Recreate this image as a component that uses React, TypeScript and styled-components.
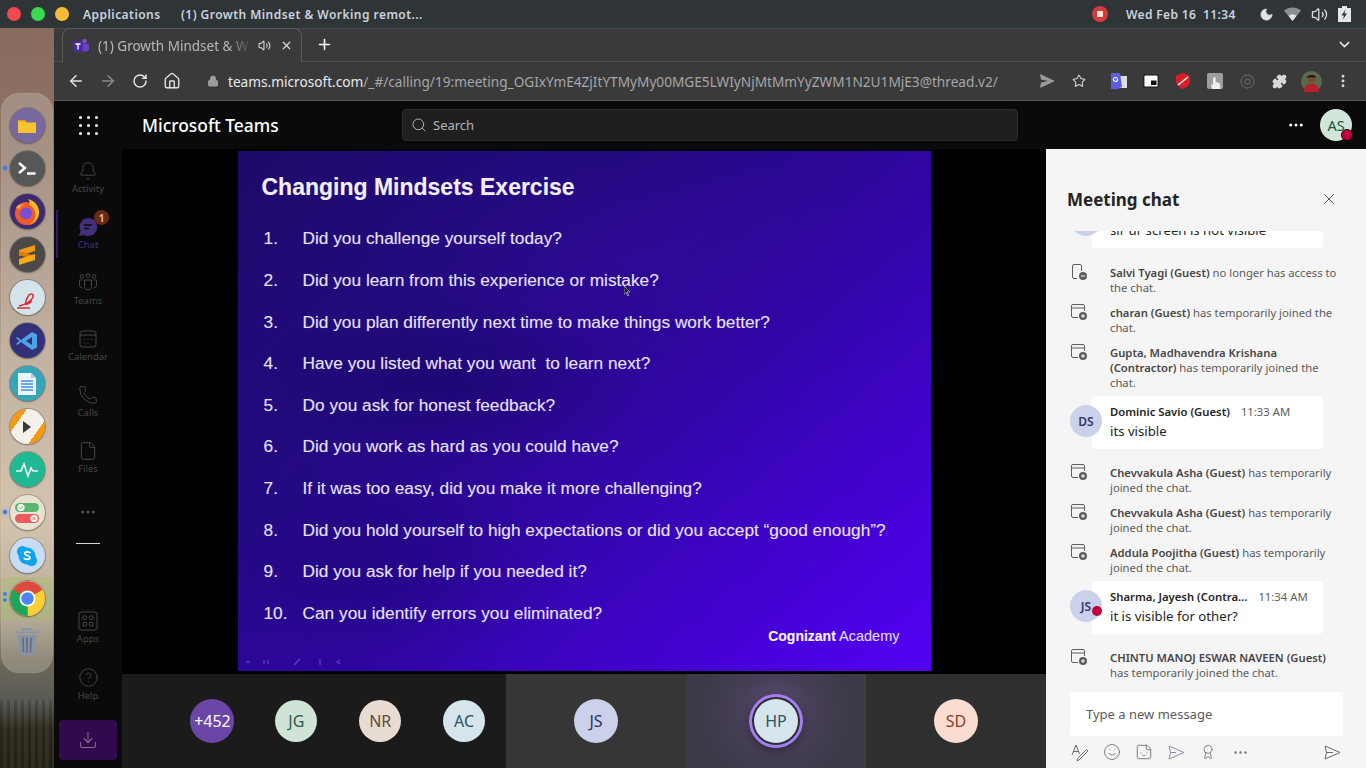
import { ReactNode } from 'react';
import styled, { createGlobalStyle } from 'styled-components';
import {
  ArrowLeft,
  ArrowRight,
  Award,
  Bell,
  ChevronDown,
  CircleHelp,
  Download,
  File,
  Home,
  Lock,
  Moon,
  MoreHorizontal,
  MoreVertical,
  Phone,
  Plus,
  Puzzle,
  RotateCw,
  Search,
  Smile,
  Star,
  Sticker,
  Volume2,
  X,
} from 'lucide-react';

const GlobalStyle = createGlobalStyle`
  html, body { margin: 0; padding: 0; height: 100%; overflow: hidden; }
  * { box-sizing: border-box; }
  body { font-family: "Noto Sans", "Open Sans", sans-serif; }
`;

const Desktop = styled.div`
  width: 1366px;
  height: 768px;
  display: flex;
  flex-direction: column;
  overflow: hidden;
  background:
    repeating-linear-gradient(90deg, rgba(0, 0, 0, 0.14) 0 3px, rgba(255, 255, 255, 0.03) 3px 7px) 0 700px / 54px 68px no-repeat,
    linear-gradient(
      180deg,
      #86695a 0%,
      #8f7566 20%,
      #b5a08c 45%,
      #cdb99f 68%,
      #a89c84 80%,
      #6f6a58 86%,
      #5a5a56 91%,
      #2f2b1f 95%,
      #28251b 100%
    );
`;

/* ---------- ubuntu top bar ---------- */
const TopBar = styled.div`
  height: 28px;
  flex: none;
  display: flex;
  align-items: center;
  background: #2f3436;
  padding-left: 7px;
  color: #c9d3df;
  font-size: 12px;
  font-weight: 600;
  letter-spacing: 0.45px;
`;
const Light = styled.span<{ $c: string }>`
  width: 14px;
  height: 14px;
  border-radius: 50%;
  background: ${(p) => p.$c};
  margin-right: 10px;
`;
const BarTitle = styled.span`
  margin-left: 4px;
  width: 98px;
  white-space: nowrap;
`;
const BarSpacer = styled.div`
  flex: 1;
`;
const RecDot = styled.div`
  width: 16px;
  height: 16px;
  border-radius: 50%;
  background: #d63b3b;
  display: flex;
  align-items: center;
  justify-content: center;
  margin-right: 18px;
  &::after {
    content: '';
    width: 6px;
    height: 6px;
    background: #f3e6d8;
    border-radius: 1px;
  }
`;
const Clock = styled.span`
  width: 132.5px;
  white-space: pre;
  letter-spacing: 0.35px;
`;
const TrayIcons = styled.div`
  display: flex;
  align-items: center;
  gap: 10px;
  width: 107.5px;
  color: #dfe3e6;
`;

/* ---------- dock ---------- */
const DesktopBody = styled.div`
  flex: 1;
  display: flex;
  min-height: 0;
`;
const DockStrip = styled.div`
  width: 54px;
  flex: none;
  padding: 65px 1px 0 1px;
`;
const Dock = styled.div`
  height: 580px;
  width: 52px;
  border-radius: 18px;
  background: rgba(226, 222, 214, 0.28);
  box-shadow: inset 0 0 0 1px rgba(255, 255, 255, 0.06);
  display: flex;
  flex-direction: column;
  align-items: center;
  padding-top: 11px;
`;
const DockSlot = styled.div<{ $active?: boolean; $dots?: number }>`
  position: relative;
  width: 52px;
  height: 43px;
  flex: none;
  display: flex;
  align-items: center;
  justify-content: center;
  background: ${(p) => (p.$active ? 'rgba(160,190,90,0.35)' : 'transparent')};
  &::before {
    content: '';
    display: ${(p) => (p.$dots ? 'block' : 'none')};
    position: absolute;
    left: 2px;
    top: ${(p) => (p.$dots === 2 ? 15 : 19)}px;
    width: 4px;
    height: 4px;
    border-radius: 50%;
    background: #3f7fe8;
    box-shadow: ${(p) => (p.$dots === 2 ? '0 6px 0 #3f7fe8' : '0 0 3px #3f7fe8')};
  }
`;
const DockBadge = styled.div<{ $bg: string }>`
  width: 35px;
  height: 35px;
  border-radius: 50%;
  background: ${(p) => p.$bg};
  box-shadow: 0 0 0 1px rgba(90, 80, 70, 0.35), 0 1px 2px rgba(0, 0, 0, 0.3);
  display: flex;
  align-items: center;
  justify-content: center;
  overflow: hidden;
`;

const dockItems: { bg: string; icon: ReactNode; dots?: number; active?: boolean }[] = [
  {
    bg: '#77699f',
    icon: (
      <svg width="20" height="16" viewBox="0 0 20 16">
        <path d="M1 2.500h7l1.500 2H19V15H1z" fill="#f7c52d" />
        <path d="M1 2h7l1 1.500H1z" fill="#e0a21c" />
      </svg>
    ),
  },
  {
    bg: '#555857',
    dots: 1,
    icon: (
      <svg width="20" height="16" viewBox="0 0 20 16">
        <path d="M2 2l6 5-6 5" fill="none" stroke="#fff" strokeWidth="2.400" />
        <path d="M10 12.500h8.500" stroke="#fff" strokeWidth="2.400" />
      </svg>
    ),
  },
  {
    bg: '#3e2a70',
    icon: (
      <svg width="30" height="30" viewBox="0 0 30 30">
        <circle cx="14.500" cy="16.500" r="11.500" fill="#ee5a2c" />
        <circle cx="14" cy="16.500" r="6" fill="#7a4fd0" />
        <path d="M16 2c8 2 12 9 11 15-1 6-5 10-10 11 6-3 7-8 6-13-1-4-3-6-6-7 1-2 1-4-1-6z" fill="#fdb52a" />
        <path d="M4 11c1-3 5-5 9-3-3 0-5 2-5 4z" fill="#f9a13a" />
      </svg>
    ),
  },
  {
    bg: '#4b4a48',
    icon: (
      <svg width="20" height="22" viewBox="0 0 20 22">
        <path d="M2 6l16-5v6L2 12z" fill="#f39a12" />
        <path d="M2 7l16 5v4L2 11z" fill="#d97f0a" />
        <path d="M2 15l16-5v6L2 21z" fill="#f7a918" />
      </svg>
    ),
  },
  {
    bg: '#d5e3ea',
    icon: (
      <svg width="24" height="24" viewBox="0 0 24 24">
        <path
          d="M4 20c4-1 12-4 14-9 1-3-2-4-4-2-2 3-4 7-3 9 1 1 4-1 6-3M2 22h13"
          fill="none"
          stroke="#dd2c33"
          strokeWidth="1.500"
        />
      </svg>
    ),
  },
  {
    bg: '#33307a',
    icon: (
      <svg width="24" height="20" viewBox="0 0 24 20">
        <path
          d="M17 1l5 2.500v13L17 19 6 11l-3.500 3L1 13l3.500-3L1 7l1.500-1L6 9zm0 5l-6 4 6 4z"
          fill="#4ba3e8"
        />
      </svg>
    ),
  },
  {
    bg: '#35a5b8',
    icon: (
      <svg width="20" height="24" viewBox="0 0 20 24">
        <path d="M1 1h13l5 5v17H1z" fill="#eef5fa" />
        <path d="M14 1l5 5h-5z" fill="#b8ccd8" />
        <path d="M4 9h12M4 12h12M4 15h12M4 18h12" stroke="#3f8fe0" strokeWidth="1.600" />
      </svg>
    ),
  },
  {
    bg: 'linear-gradient(125deg,#f29a14 0 28%,#f5f1e8 28% 72%,#f29a14 72%)',
    icon: (
      <svg width="10" height="12" viewBox="0 0 10 12">
        <path d="M1 0l8 6-8 6z" fill="#3a3a3a" />
      </svg>
    ),
  },
  {
    bg: '#21b894',
    icon: (
      <svg width="24" height="16" viewBox="0 0 24 16">
        <path d="M1 9h5l3-7 4 12 3-8 2 3h5" fill="none" stroke="#f2f7f4" strokeWidth="1.600" />
      </svg>
    ),
  },
  {
    bg: '#e6e3d3',
    dots: 1,
    icon: (
      <svg width="28" height="24" viewBox="0 0 28 24">
        <rect x="2" y="2" width="24" height="9" rx="4.500" fill="#5bb56c" />
        <circle cx="8" cy="6.500" r="3.600" fill="#fff" />
        <path d="M6 6.500l1.500 1.500 2.500-3" fill="none" stroke="#5bb56c" />
        <rect x="2" y="13" width="24" height="9" rx="4.500" fill="#ec5b5b" />
        <circle cx="21" cy="17.500" r="3.600" fill="#fff" />
        <path d="M19.500 16l3 3M22.500 16l-3 3" stroke="#ec5b5b" />
      </svg>
    ),
  },
  {
    bg: '#c8ddf5',
    icon: (
      <svg width="24" height="24" viewBox="0 0 24 24">
        <circle cx="7.500" cy="7.500" r="5.500" fill="#0fa5ee" />
        <circle cx="16.500" cy="16.500" r="5.500" fill="#0fa5ee" />
        <circle cx="12" cy="12" r="8.500" fill="#0fa5ee" />
        <path
          d="M15.500 9c-1-1.400-5.500-1.800-5.800.4-.3 2.400 5.600 1.800 5.300 4.400-.3 2-5 1.900-6.200.2"
          fill="none"
          stroke="#fff"
          strokeWidth="1.700"
        />
      </svg>
    ),
  },
  {
    bg: '#fff',
    dots: 2,
    active: true,
    icon: (
      <svg width="35" height="35" viewBox="0 0 35 35">
        <circle cx="17.500" cy="17.500" r="17.500" fill="#dd4b3e" />
        <path d="M17.500 17.500L32.700 8.800A17.500 17.500 0 0 1 17.500 35z" fill="#fcd030" />
        <path d="M17.500 17.500L17.500 35A17.500 17.500 0 0 1 2.300 8.800z" fill="#1da55a" />
        <circle cx="17.500" cy="17.500" r="8" fill="#fff" />
        <circle cx="17.500" cy="17.500" r="6.200" fill="#4c84ee" />
      </svg>
    ),
  },
];

/* ---------- browser chrome ---------- */
const Browser = styled.div`
  flex: 1;
  min-width: 0;
  display: flex;
  flex-direction: column;
`;
const TabStrip = styled.div`
  height: 34px;
  flex: none;
  display: flex;
  align-items: flex-end;
  padding-left: 8px;
  background: #3a3a3a;
  border-top: 1px solid #4a4a4a;
  border-bottom: 1px solid #4e4e4e;
  color: #fff;
`;
const Tab = styled.div`
  width: 240px;
  height: 34px;
  margin-bottom: -1px;
  display: flex;
  align-items: center;
  padding-left: 10px;
  background: #3a3a3a;
  border: 1px solid #5a5a5a;
  border-bottom: none;
  border-radius: 8px 8px 0 0;
  color: #b7b9bb;
  font-size: 13.5px;
`;
const TabTitle = styled.span`
  margin-left: 9px;
  width: 153px;
  white-space: nowrap;
  overflow: hidden;
  -webkit-mask-image: linear-gradient(90deg, #000 85%, transparent);
  mask-image: linear-gradient(90deg, #000 85%, transparent);
`;
const TabActions = styled.div`
  display: flex;
  align-items: center;
  gap: 9px;
  margin-left: 7px;
  color: #d6d6d6;
`;
const NewTab = styled.div`
  width: 44px;
  height: 33px;
  display: flex;
  align-items: center;
  justify-content: center;
`;
const StripEnd = styled.div`
  margin-left: auto;
  width: 44px;
  height: 33px;
  display: flex;
  align-items: center;
  justify-content: center;
  color: #e6e6e6;
`;
const Toolbar = styled.div`
  height: 39px;
  flex: none;
  display: flex;
  align-items: center;
  background: #3a3a3a;
  border-bottom: 1px solid #555;
`;
const NavButton = styled.div<{ $dim?: boolean }>`
  width: 32px;
  height: 32px;
  flex: none;
  display: flex;
  align-items: center;
  justify-content: center;
  color: ${(p) => (p.$dim ? '#8a8a8a' : '#e4e4e4')};
`;
const NavGroup = styled.div`
  display: flex;
  margin-left: 6px;
`;
const LockWrap = styled.div`
  margin-left: 19px;
  width: 21px;
  display: flex;
  color: #9c9c9c;
`;
const Url = styled.div`
  width: 796px;
  font-size: 13.65px;
  color: #a5a7aa;
  white-space: nowrap;
`;
const UrlHost = styled.span`
  color: #e8eaed;
`;
const ExtButton = styled.div`
  width: 32px;
  height: 32px;
  flex: none;
  display: flex;
  align-items: center;
  justify-content: center;
  color: #d8d8d8;
`;
const ToolIcons = styled.div`
  display: flex;
  align-items: center;
  margin-left: 7px;
`;
const ExtGap = styled.div`
  width: 8px;
`;

/* ---------- teams ---------- */
const TeamsApp = styled.div`
  flex: 1;
  min-height: 0;
  display: flex;
  flex-direction: column;
  background: #000;
`;
const TeamsHeader = styled.div`
  height: 48px;
  flex: none;
  display: flex;
  align-items: center;
  background: #0a0a0a;
  color: #fff;
`;
const WaffleCell = styled.div`
  width: 68px;
  display: flex;
  justify-content: center;
`;
const Waffle = styled.div`
  display: grid;
  grid-template-columns: repeat(3, 3px);
  gap: 5px;
  span {
    width: 3px;
    height: 3px;
    border-radius: 50%;
    background: #fff;
  }
`;
const AppTitle = styled.div`
  margin-left: 20px;
  width: 260px;
  font-size: 17.4px;
  font-weight: 500;
`;
const SearchBox = styled.div`
  width: 616px;
  height: 32px;
  display: flex;
  align-items: center;
  gap: 6px;
  padding-left: 8px;
  border-radius: 4px;
  background: #1f1f1f;
  border: 1px solid #2c2c2c;
  color: #b4b4b4;
  font-size: 13px;
`;
const HeaderMore = styled.div`
  margin-left: 269px;
  width: 18px;
  display: flex;
  color: #fff;
`;
const HeaderAvatar = styled.div`
  position: relative;
  margin-left: 15px;
  width: 32px;
  height: 32px;
  border-radius: 50%;
  background: #cfe6d8;
  color: #24533f;
  font-size: 14.5px;
  display: flex;
  align-items: center;
  justify-content: center;
`;
const PresenceDot = styled.span`
  position: absolute;
  right: -1px;
  bottom: 0;
  width: 12px;
  height: 12px;
  border-radius: 50%;
  background: #c4003a;
  border: 1px solid #0a0a0a;
`;
const TeamsBody = styled.div`
  flex: 1;
  min-height: 0;
  display: flex;
`;
const Rail = styled.nav`
  width: 68px;
  flex: none;
  display: flex;
  flex-direction: column;
  background: #0a0a0a;
  padding-top: 1px;
`;
const RailItem = styled.div<{ $active?: boolean }>`
  position: relative;
  height: 56px;
  flex: none;
  display: flex;
  flex-direction: column;
  align-items: center;
  justify-content: center;
  gap: 1px;
  color: ${(p) => (p.$active ? '#43307c' : '#464646')};
  font-size: 9.5px;
  &::before {
    content: '';
    display: ${(p) => (p.$active ? 'block' : 'none')};
    position: absolute;
    left: 2px;
    top: 4px;
    width: 2px;
    height: 48px;
    background: #35166a;
  }
`;
const ChatBadge = styled.span`
  position: absolute;
  top: 4px;
  right: 13px;
  width: 15px;
  height: 15px;
  border-radius: 50%;
  background: #6b2a14;
  color: #d9b9aa;
  font-size: 10px;
  font-weight: 700;
  display: flex;
  align-items: center;
  justify-content: center;
`;
const RailMore = styled.div`
  height: 52px;
  flex: none;
  display: flex;
  align-items: center;
  justify-content: center;
  color: #555;
`;
const RailRule = styled.div`
  width: 24px;
  height: 1px;
  flex: none;
  margin: 5px auto 0;
  background: #d8d8d8;
`;
const RailSpacer = styled.div`
  flex: 1;
`;
const RailDownload = styled.div`
  width: 58px;
  height: 40px;
  flex: none;
  margin: 8px 0 8px 5px;
  border-radius: 4px;
  background: #30094f;
  color: #7d6f8c;
  display: flex;
  align-items: center;
  justify-content: center;
`;

const Stage = styled.main`
  flex: 1;
  min-width: 0;
  display: flex;
  flex-direction: column;
`;
const SlideArea = styled.div`
  height: 525px;
  flex: none;
  display: flex;
  justify-content: center;
  padding-top: 2px;
  background: #000;
`;
const Slide = styled.section`
  position: relative;
  width: 693px;
  height: 520px;
  padding: 22px 24px 0 24px;
  color: #e6e1fb;
  font-family: "Liberation Sans", Arial, sans-serif;
  background:
    radial-gradient(ellipse 200px 90px at 30% 45%, rgba(10, 5, 60, 0.28), transparent),
    radial-gradient(ellipse 260px 110px at 55% 20%, rgba(60, 10, 170, 0.25), transparent),
    radial-gradient(ellipse 180px 120px at 20% 80%, rgba(15, 5, 90, 0.3), transparent),
    linear-gradient(140deg, #1e0a6a 0%, #230a80 30%, #2f06a2 55%, #3f03c8 75%, #5400f4 100%);
  text-shadow: 0 0 1px rgba(235, 230, 255, 0.3);
`;
const SlideTitle = styled.h1`
  margin: 0 0 17px;
  font-size: 23px;
  line-height: 28px;
  font-weight: 700;
  color: #f2efff;
`;
const Questions = styled.ol`
  list-style: none;
  margin: 0;
  padding: 0 0 0 2px;
  display: flex;
  flex-direction: column;
`;
const Question = styled.li`
  height: 41.63px;
  display: flex;
  align-items: center;
  font-size: 17.3px;
  white-space: pre;
  span {
    width: 39px;
    flex: none;
  }
`;
const SlideBrand = styled.div`
  position: absolute;
  right: 31px;
  bottom: 27px;
  font-size: 14.5px;
  color: #dcd8ff;
  b {
    color: #f4f2ff;
    font-size: 14px;
  }
`;
const SlideCursor = styled.svg`
  position: absolute;
  left: 386px;
  top: 135px;
`;
const SlideControls = styled.svg`
  position: absolute;
  left: 6px;
  bottom: 5px;
  opacity: 0.4;
`;

const Participants = styled.div`
  flex: 1;
  display: flex;
  background: #1b1b1b;
`;
const OverflowGroup = styled.div`
  width: 384px;
  flex: none;
  display: flex;
  align-items: center;
  padding-left: 48.5px;
`;
const OverflowCell = styled.div`
  width: 84px;
  display: flex;
  justify-content: center;
`;
const Tile = styled.div<{ $bg: string }>`
  width: 180px;
  flex: none;
  display: flex;
  align-items: center;
  justify-content: center;
  background: ${(p) => p.$bg};
`;
const Avatar = styled.div<{ $bg: string; $fg: string; $size?: number; $speaking?: boolean }>`
  width: ${(p) => p.$size ?? 44}px;
  height: ${(p) => p.$size ?? 44}px;
  border-radius: 50%;
  flex: none;
  background: ${(p) => p.$bg};
  color: ${(p) => p.$fg};
  font-size: 16px;
  display: flex;
  align-items: center;
  justify-content: center;
  box-shadow: ${(p) =>
    p.$speaking ? '0 0 0 2px #2b2b33, 0 0 0 5px #a57ff0, 0 3px 10px 5px rgba(0,0,0,.35)' : 'none'};
`;

/* ---------- chat panel ---------- */
const ChatPanel = styled.aside`
  width: 320px;
  flex: none;
  display: flex;
  flex-direction: column;
  background: #f5f5f5;
  color: #252423;
`;
const ChatHeader = styled.div`
  height: 82px;
  flex: none;
  display: flex;
  align-items: center;
  justify-content: space-between;
  padding: 18px 28px 0 21px;
  color: #242424;
`;
const ChatTitle = styled.h2`
  margin: 0;
  font-size: 17px;
  font-weight: 700;
`;
const ChatScroll = styled.div`
  height: 461px;
  flex: none;
  overflow: hidden;
  display: flex;
  flex-direction: column;
  justify-content: flex-end;
  padding-bottom: 12px;
  font-size: 11.25px;
  line-height: 15px;
`;
const EventRow = styled.div<{ $before?: number }>`
  display: flex;
  flex: none;
  padding: 0 20px 0 24px;
  margin-top: ${(p) => p.$before ?? 10}px;
  color: #5c5b5a;
  b {
    font-weight: 600;
    color: #484644;
  }
`;
const EventIcon = styled.svg`
  flex: none;
  margin: -2px 22px 0 0;
`;
const MessageRow = styled.div<{ $before: number }>`
  position: relative;
  flex: none;
  margin: ${(p) => p.$before}px 0 0 46px;
  width: 231px;
  height: 53px;
  padding: 8px 12px 0 18px;
  background: #fff;
  border-radius: 4px;
`;
const MessageAvatar = styled.div`
  position: absolute;
  left: -22px;
  top: 9px;
  width: 32px;
  height: 32px;
  border-radius: 50%;
  background: #cbd1ea;
  color: #33376c;
  font-size: 12px;
  font-weight: 600;
  display: flex;
  align-items: center;
  justify-content: center;
`;
const BusyDot = styled.span`
  position: absolute;
  left: 0;
  top: 25px;
  width: 10px;
  height: 10px;
  border-radius: 50%;
  background: #c4003a;
`;
const MessageMeta = styled.div`
  display: flex;
  justify-content: flex-start;
  gap: 11px;
  min-height: 16px;
  font-size: 11.3px;
  line-height: 16px;
  white-space: nowrap;
  b {
    font-weight: 600;
  }
  span {
    color: #605e5c;
  }
`;
const MessageText = styled.div`
  font-size: 13.2px;
  line-height: 22px;
  color: #252423;
  white-space: nowrap;
`;
const Compose = styled.div`
  height: 44px;
  flex: none;
  margin: 0 23px 0 24px;
  padding-left: 16px;
  display: flex;
  align-items: center;
  background: #fff;
  border-radius: 3px;
  font-size: 13px;
  color: #5c5b5a;
`;
const ComposeTools = styled.div`
  flex: 1;
  display: flex;
  align-items: center;
  padding: 0 25px 0 18px;
  color: #6a6968;
`;
const ToolCell = styled.div`
  width: 32px;
  display: flex;
  justify-content: center;
`;
const SendButton = styled.div`
  margin-left: auto;
  display: flex;
`;

const railIconProps = { width: 20, height: 20, viewBox: '0 0 20 20', fill: 'none', stroke: 'currentColor' };

const rail: { label: string; icon: ReactNode; active?: boolean; badge?: boolean }[] = [
  { label: 'Activity', icon: <Bell size={20} strokeWidth={1.2} /> },
  {
    label: 'Chat',
    active: true,
    badge: true,
    icon: (
      <svg width="20" height="20" viewBox="0 0 20 20">
        <path d="M10 1a9 9 0 1 1-4 17l-5 1 1.500-5A9 9 0 0 1 10 1z" fill="#43307c" />
        <path d="M6 8h8M6 11.500h5" stroke="#0a0a0a" strokeWidth="1.400" />
      </svg>
    ),
  },
  {
    label: 'Teams',
    icon: (
      <svg {...railIconProps}>
        <circle cx="4" cy="3.500" r="1.800" />
        <circle cx="10" cy="2.500" r="1.800" />
        <circle cx="16" cy="3.500" r="1.800" />
        <path d="M6.500 7h7v6.500a3.500 3.500 0 0 1-7 0zM4.500 7H1.500v5a3 3 0 0 0 3 3M15.500 7h3v5a3 3 0 0 1-3 3" />
      </svg>
    ),
  },
  {
    label: 'Calendar',
    icon: (
      <svg {...railIconProps}>
        <rect x="2" y="2" width="16" height="16" rx="2.500" />
        <path d="M2 6h16M6 10.500h1M9.500 10.500h1M13 10.500h1M6 14h1M9.500 14h1" />
      </svg>
    ),
  },
  { label: 'Calls', icon: <Phone size={20} strokeWidth={1.2} /> },
  { label: 'Files', icon: <File size={20} strokeWidth={1.2} /> },
];

const questions = [
  'Did you challenge yourself today?',
  'Did you learn from this experience or mistake?',
  'Did you plan differently next time to make things work better?',
  'Have you listed what you want  to learn next?',
  'Do you ask for honest feedback?',
  'Did you work as hard as you could have?',
  'If it was too easy, did you make it more challenging?',
  'Did you hold yourself to high expectations or did you accept “good enough”?',
  'Did you ask for help if you needed it?',
  'Can you identify errors you eliminated?',
];

function JoinIcon({ left }: { left?: boolean }) {
  return (
    <EventIcon width="18" height="18" viewBox="0 0 18 18">
      {left ? (
        <path d="M4 1.500h6a1.500 1.500 0 0 1 1.500 1.500v5M7 15.500H4A1.500 1.500 0 0 1 2.500 14V3A1.500 1.500 0 0 1 4 1.500" fill="none" stroke="#605e5c" />
      ) : (
        <path d="M8 14.500H3A1.500 1.500 0 0 1 1.500 13V3A1.500 1.500 0 0 1 3 1.500h10A1.500 1.500 0 0 1 14.500 3v5M1.500 5h13" fill="none" stroke="#605e5c" />
      )}
      <circle cx="13" cy="13" r="4" fill="#605e5c" />
      <path d={left ? 'M11 13h4' : 'M11 13h4M13 11v4'} stroke="#fff" strokeWidth="1" />
    </EventIcon>
  );
}

export default function App() {
  return (
    <>
      <GlobalStyle />
      <Desktop>
        <TopBar>
          <Light $c="#f04a50" />
          <Light $c="#36d94f" />
          <Light $c="#f7bc35" />
          <BarTitle>Applications</BarTitle>
          <span>(1) Growth Mindset &amp; Working remot...</span>
          <BarSpacer />
          <RecDot />
          <Clock>Wed Feb 16  11:34</Clock>
          <TrayIcons>
            <Moon size={15} fill="currentColor" strokeWidth={1} />
            <svg width="17" height="14" viewBox="0 0 17 14">
              <path d="M0 3.500C5 -.5 12 -.5 17 3.500L8.500 14z" fill="#8d9092" />
              <path d="M4.500 8.700a6.500 6.500 0 0 1 8 0L8.500 14z" fill="#e4e6e8" />
            </svg>
            <Volume2 size={17} strokeWidth={1.8} />
            <svg width="13" height="16" viewBox="0 0 13 16">
              <path d="M4 0h5v2h4v14H0V2h4z" fill="#e4e6e8" />
              <path d="M7.500 3.500L3.500 9.500h2.500l-1 4 4-6H6.500z" fill="#2f3436" />
            </svg>
          </TrayIcons>
        </TopBar>
        <DesktopBody>
          <DockStrip>
            <Dock>
              {dockItems.map((item, i) => (
                <DockSlot key={i} $dots={item.dots} $active={item.active}>
                  <DockBadge $bg={item.bg}>{item.icon}</DockBadge>
                </DockSlot>
              ))}
              <DockSlot>
                <svg width="26" height="28" viewBox="0 0 26 28">
                  <path d="M9 3V1h8v2M1 4.500h24" fill="none" stroke="#8b96a8" strokeWidth="2" />
                  <path d="M4 7h18l-1.500 20h-15z" fill="#8793a6" />
                  <path d="M9 9.500l.5 15M13 9.500v15M17 9.500l-.5 15" stroke="#626c7e" strokeWidth="1.600" />
                </svg>
              </DockSlot>
            </Dock>
          </DockStrip>
          <Browser>
            <TabStrip>
              <Tab>
                <svg width="16" height="16" viewBox="0 0 16 16">
                  <circle cx="11.500" cy="3" r="2.200" fill="#7b4fd0" />
                  <rect x="8" y="5.500" width="8" height="8" rx="2" fill="#6a3fc0" />
                  <rect x="0" y="3.500" width="10" height="10" rx="1" fill="#4b2aa8" />
                  <path d="M2.500 6h5M5 6v5.500" stroke="#fff" strokeWidth="1.300" />
                </svg>
                <TabTitle>(1) Growth Mindset &amp; Working remotely</TabTitle>
                <TabActions>
                  <Volume2 size={13} />
                  <X size={13} strokeWidth={2.2} />
                </TabActions>
              </Tab>
              <NewTab>
                <Plus size={17} strokeWidth={2.2} />
              </NewTab>
              <StripEnd>
                <ChevronDown size={17} />
              </StripEnd>
            </TabStrip>
            <Toolbar>
              <NavGroup>
                <NavButton>
                  <ArrowLeft size={18} strokeWidth={2} />
                </NavButton>
                <NavButton $dim>
                  <ArrowRight size={18} strokeWidth={2} />
                </NavButton>
                <NavButton>
                  <RotateCw size={16} strokeWidth={2.2} />
                </NavButton>
                <NavButton>
                  <Home size={18} strokeWidth={1.8} />
                </NavButton>
              </NavGroup>
              <LockWrap>
                <Lock size={12} fill="currentColor" strokeWidth={2} />
              </LockWrap>
              <Url>
                <UrlHost>teams.microsoft.com</UrlHost>
                /_#/calling/19:meeting_OGIxYmE4ZjItYTMyMy00MGE5LWIyNjMtMmYyZWM1N2U1MjE3@thread.v2/
              </Url>
              <ToolIcons>
                <ExtButton>
                  <svg width="15" height="14" viewBox="0 0 15 14">
                    <path d="M0 0l15 7L0 14l1-5.500L8 7 1 5.500z" fill="#9a9a9a" />
                  </svg>
                </ExtButton>
                <ExtButton>
                  <Star size={14} strokeWidth={1.8} />
                </ExtButton>
                <ExtGap />
                <ExtButton>
                  <svg width="16" height="16" viewBox="0 0 16 16">
                    <rect x="6" y="3" width="10" height="12" fill="#d9dde4" />
                    <path d="M0 0h9l2 14-4 2H0z" fill="#5a5ee0" />
                    <circle cx="4.500" cy="6.500" r="2" fill="none" stroke="#fff" strokeWidth="1.200" />
                  </svg>
                </ExtButton>
                <ExtButton>
                  <svg width="16" height="14" viewBox="0 0 16 14">
                    <rect x=".8" y=".8" width="14.400" height="12.400" rx="1.500" fill="#fff" stroke="#111" strokeWidth="1.200" />
                    <rect x="8" y="6.500" width="5.500" height="4.500" fill="#111" />
                  </svg>
                </ExtButton>
                <ExtButton>
                  <svg width="14" height="16" viewBox="0 0 14 16">
                    <path d="M7 0l7 2.500V8c0 4-3 6.500-7 8-4-1.500-7-4-7-8V2.500z" fill="#d81e2a" />
                    <path d="M2 12L12 4" stroke="#fff" strokeWidth="1.400" />
                  </svg>
                </ExtButton>
                <ExtButton>
                  <svg width="16" height="16" viewBox="0 0 16 16">
                    <rect width="16" height="16" rx="2" fill="#9d9d9d" />
                    <path d="M5 16l-1-5 2 1V5.500a1.300 1.300 0 0 1 2.600 0V9l4 1 1 6z" fill="#f0f0f0" />
                  </svg>
                </ExtButton>
                <ExtButton>
                  <svg width="15" height="15" viewBox="0 0 15 15">
                    <circle cx="7.500" cy="7.500" r="6.500" fill="none" stroke="#5f5f5f" strokeWidth="1.300" />
                    <circle cx="7.500" cy="7.500" r="2.500" fill="none" stroke="#5f5f5f" strokeWidth="1.300" />
                  </svg>
                </ExtButton>
                <ExtButton>
                  <Puzzle size={15} fill="currentColor" />
                </ExtButton>
                <ExtButton>
                  <svg width="21" height="21" viewBox="0 0 21 21">
                    <circle cx="10.500" cy="10.500" r="10.500" fill="#5a6a4a" />
                    <path d="M3 21c0-6 3-8 7.500-8s7.500 2 7.500 8z" fill="#b81e2c" />
                    <circle cx="10.500" cy="8" r="4" fill="#7a4c36" />
                    <path d="M6 7c0-4 9-4 9 0-3-1-6-1-9 0z" fill="#1b1510" />
                  </svg>
                </ExtButton>
                <ExtButton>
                  <MoreVertical size={16} strokeWidth={2.4} />
                </ExtButton>
              </ToolIcons>
            </Toolbar>
            <TeamsApp>
              <TeamsHeader>
                <WaffleCell>
                  <Waffle>
                    {Array.from({ length: 9 }).map((_, i) => (
                      <span key={i} />
                    ))}
                  </Waffle>
                </WaffleCell>
                <AppTitle>Microsoft Teams</AppTitle>
                <SearchBox>
                  <Search size={16} strokeWidth={1.5} />
                  Search
                </SearchBox>
                <HeaderMore>
                  <MoreHorizontal size={18} strokeWidth={2} />
                </HeaderMore>
                <HeaderAvatar>
                  AS
                  <PresenceDot />
                </HeaderAvatar>
              </TeamsHeader>
              <TeamsBody>
                <Rail>
                  {rail.map((item) => (
                    <RailItem key={item.label} $active={item.active}>
                      {item.icon}
                      {item.label}
                      {item.badge && <ChatBadge>1</ChatBadge>}
                    </RailItem>
                  ))}
                  <RailMore>
                    <MoreHorizontal size={18} />
                  </RailMore>
                  <RailRule />
                  <RailSpacer />
                  <RailItem>
                    <svg {...railIconProps}>
                      <rect x="1" y="1" width="18" height="18" rx="2.500" />
                      <rect x="5" y="5" width="3.500" height="3.500" rx=".8" />
                      <rect x="11.500" y="5" width="3.500" height="3.500" rx=".8" />
                      <rect x="5" y="11.500" width="3.500" height="3.500" rx=".8" />
                      <rect x="11.500" y="11.500" width="3.500" height="3.500" rx=".8" />
                    </svg>
                    Apps
                  </RailItem>
                  <RailItem>
                    <CircleHelp size={21} strokeWidth={1.1} />
                    Help
                  </RailItem>
                  <RailDownload>
                    <Download size={20} strokeWidth={1.3} />
                  </RailDownload>
                </Rail>
                <Stage>
                  <SlideArea>
                    <Slide>
                      <SlideTitle>Changing Mindsets Exercise</SlideTitle>
                      <Questions>
                        {questions.map((q, i) => (
                          <Question key={i}>
                            <span>{i + 1}.</span>
                            {q}
                          </Question>
                        ))}
                      </Questions>
                      <SlideBrand>
                        <b>Cognizant</b> Academy
                      </SlideBrand>
                      <SlideCursor width="7" height="10" viewBox="0 0 7 10">
                        <path d="M0 0l6 6H3l2 4-1 .5-2-4-2 2z" fill="#111" stroke="#fff" strokeWidth=".5" />
                      </SlideCursor>
                      <SlideControls width="100" height="8" viewBox="0 0 100 8">
                        <path d="M2 4h4M20 2v4M24 2v4M50 7l6-6M76 1v6M96 2l-3 2 3 2" stroke="#a78cff" strokeWidth="1.400" fill="none" />
                      </SlideControls>
                    </Slide>
                  </SlideArea>
                  <Participants>
                    <OverflowGroup>
                      <OverflowCell>
                        <Avatar $bg="#6b46a6" $fg="#fff">+452</Avatar>
                      </OverflowCell>
                      <OverflowCell>
                        <Avatar $bg="#cfe4d6" $fg="#2d5a44" $size={42}>JG</Avatar>
                      </OverflowCell>
                      <OverflowCell>
                        <Avatar $bg="#e8dcd2" $fg="#5e4a3e" $size={42}>NR</Avatar>
                      </OverflowCell>
                      <OverflowCell>
                        <Avatar $bg="#d6e4ec" $fg="#2e5266" $size={42}>AC</Avatar>
                      </OverflowCell>
                    </OverflowGroup>
                    <Tile $bg="#363636">
                      <Avatar $bg="#cbd1ea" $fg="#2b2f66">JS</Avatar>
                    </Tile>
                    <Tile $bg="radial-gradient(circle at 50% 40%, #5e4e7c 0%, #473f57 34%, #3e3a48 70%)">
                      <Avatar $bg="#d6e4ec" $fg="#2e5266" $size={44} $speaking>HP</Avatar>
                    </Tile>
                    <Tile $bg="#2f2f2f">
                      <Avatar $bg="#fbdcd1" $fg="#8c3d28">SD</Avatar>
                    </Tile>
                  </Participants>
                </Stage>
                <ChatPanel>
                  <ChatHeader>
                    <ChatTitle>Meeting chat</ChatTitle>
                    <X size={18} strokeWidth={1} />
                  </ChatHeader>
                  <ChatScroll>
                    <MessageRow $before={0}>
                      <MessageAvatar />
                      <BusyDot />
                      <MessageMeta />
                      <MessageText>sir ur screen is not visible</MessageText>
                    </MessageRow>
                    <EventRow $before={17}>
                      <JoinIcon left />
                      <div>
                        <b>Salvi Tyagi (Guest)</b> no longer has access to the chat.
                      </div>
                    </EventRow>
                    <EventRow>
                      <JoinIcon />
                      <div>
                        <b>charan (Guest)</b> has temporarily joined the chat.
                      </div>
                    </EventRow>
                    <EventRow>
                      <JoinIcon />
                      <div>
                        <b>Gupta, Madhavendra Krishana (Contractor)</b> has temporarily joined the chat.
                      </div>
                    </EventRow>
                    <MessageRow $before={6}>
                      <MessageAvatar>DS</MessageAvatar>
                      <MessageMeta>
                        <b>Dominic Savio (Guest)</b>
                        <span>11:33 AM</span>
                      </MessageMeta>
                      <MessageText>its visible</MessageText>
                    </MessageRow>
                    <EventRow $before={16}>
                      <JoinIcon />
                      <div>
                        <b>Chevvakula Asha (Guest)</b> has temporarily joined the chat.
                      </div>
                    </EventRow>
                    <EventRow>
                      <JoinIcon />
                      <div>
                        <b>Chevvakula Asha (Guest)</b> has temporarily joined the chat.
                      </div>
                    </EventRow>
                    <EventRow>
                      <JoinIcon />
                      <div>
                        <b>Addula Poojitha (Guest)</b> has temporarily joined the chat.
                      </div>
                    </EventRow>
                    <MessageRow $before={6}>
                      <MessageAvatar>JS</MessageAvatar>
                      <BusyDot />
                      <MessageMeta>
                        <b>Sharma, Jayesh (Contra...</b>
                        <span>11:34 AM</span>
                      </MessageMeta>
                      <MessageText>it is visible for other?</MessageText>
                    </MessageRow>
                    <EventRow $before={16}>
                      <JoinIcon />
                      <div>
                        <b>CHINTU MANOJ ESWAR NAVEEN (Guest)</b> has temporarily joined the chat.
                      </div>
                    </EventRow>
                  </ChatScroll>
                  <Compose>Type a new message</Compose>
                  <ComposeTools>
                    <ToolCell>
                      <svg width="18" height="18" viewBox="0 0 18 18" fill="none" stroke="currentColor">
                        <path d="M1 12L5 2l3.500 9M2.500 8.500h5M8 17l9-9-1.500-1.500-9 9-.5 2z" />
                      </svg>
                    </ToolCell>
                    <ToolCell>
                      <Smile size={18} strokeWidth={1.1} />
                    </ToolCell>
                    <ToolCell>
                      <Sticker size={18} strokeWidth={1.1} />
                    </ToolCell>
                    <ToolCell>
                      <svg width="17" height="15" viewBox="0 0 17 15" fill="none" stroke="#8a8fa8">
                        <path d="M1 1l15 6.500L1 14l1.500-6.500zM2.500 7.500H8" />
                      </svg>
                    </ToolCell>
                    <ToolCell>
                      <Award size={16} strokeWidth={1.2} />
                    </ToolCell>
                    <ToolCell>
                      <MoreHorizontal size={17} strokeWidth={1.5} />
                    </ToolCell>
                    <SendButton>
                      <svg width="17" height="15" viewBox="0 0 17 15" fill="none" stroke="currentColor">
                        <path d="M1 1l15 6.500L1 14l1.500-6.500zM2.500 7.500H9" />
                      </svg>
                    </SendButton>
                  </ComposeTools>
                </ChatPanel>
              </TeamsBody>
            </TeamsApp>
          </Browser>
        </DesktopBody>
      </Desktop>
    </>
  );
}
